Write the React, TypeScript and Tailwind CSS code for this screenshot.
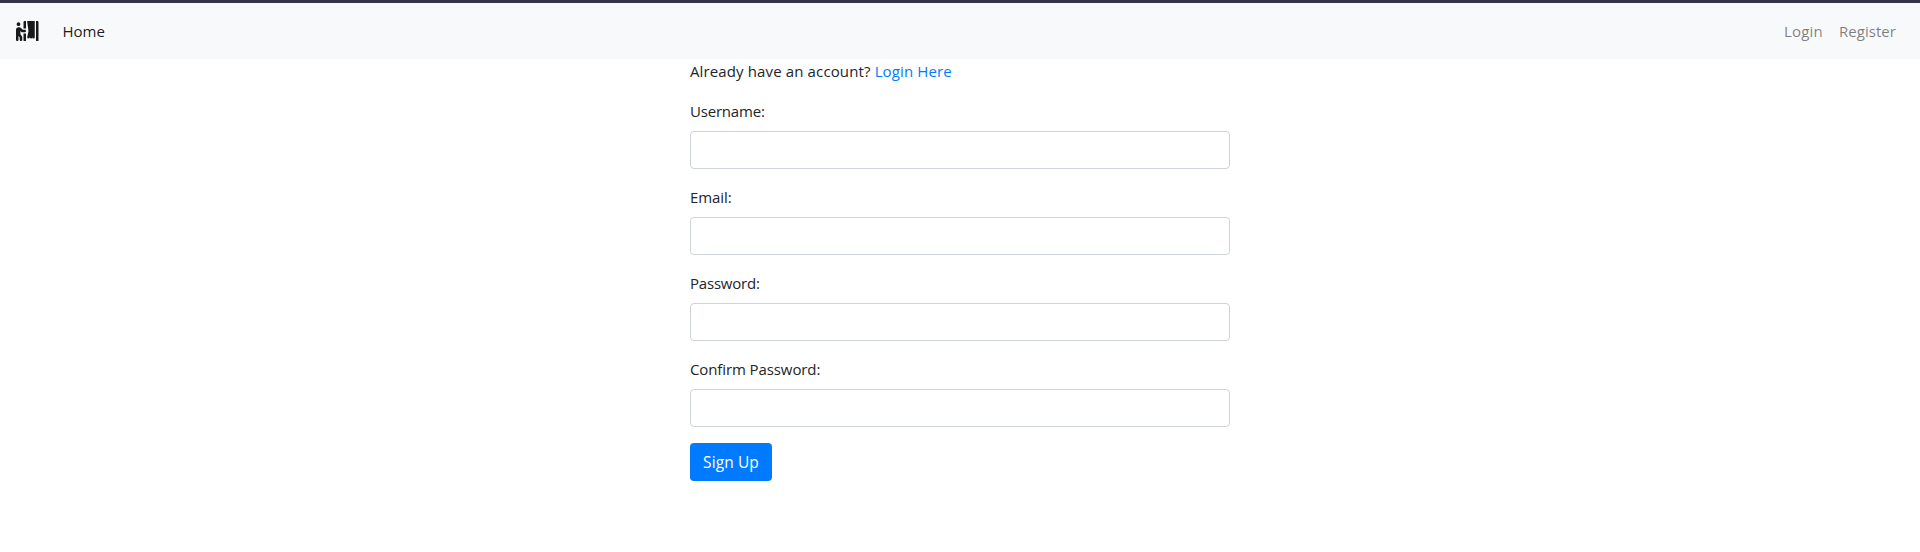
import { FaPersonBooth } from "react-icons/fa";

const fields = [
  { id: "username", label: "Username:", type: "text", spacing: "tracking-[-0.2px]" },
  { id: "email", label: "Email:", type: "email", spacing: "tracking-[-0.1px]" },
  { id: "password", label: "Password:", type: "password", spacing: "tracking-[-0.2px]" },
  { id: "confirm", label: "Confirm Password:", type: "password", spacing: "tracking-[-0.1px]" },
];

export default function App() {
  return (
    <div className="min-h-[552px] bg-white font-['Open_Sans','Noto_Sans',sans-serif] text-[15px] leading-6 text-[#212529]">
      <nav className="flex h-[59px] items-center justify-between border-t-3 border-[#343648] bg-[#f8f9fa] px-4">
        <div className="flex items-center">
          <a href="#" aria-label="Site" className="mr-4 text-xl text-black/90">
            <FaPersonBooth className="h-5 w-[22.5px]" />
          </a>
          <a href="#" className="px-2 text-black/90">Home</a>
        </div>
        <div className="flex items-center text-black/50">
          <a href="#" className="px-2 tracking-[0.18px]">Login</a>
          <a href="#" className="px-2 tracking-[0.05px]">Register</a>
        </div>
      </nav>
      <main className="mx-auto w-[540px]">
        <p className="mb-4 tracking-[0.13px]">
          Already have an account? <a href="#" className="text-[#007bff]">Login Here</a>
        </p>
        <form>
          {fields.map((f) => (
            <div key={f.id} className="mb-4">
              <label htmlFor={f.id} className={`mb-2 block ${f.spacing}`}>{f.label}</label>
              <input
                id={f.id}
                type={f.type}
                className="block h-[38px] w-full rounded border border-[#ced4da] bg-white px-3"
              />
            </div>
          ))}
          <button type="button" className="h-[38px] w-[82px] rounded bg-[#007bff] text-center text-[15.5px] tracking-[0.1px] whitespace-nowrap text-white">
            Sign Up
          </button>
        </form>
      </main>
    </div>
  );
}
